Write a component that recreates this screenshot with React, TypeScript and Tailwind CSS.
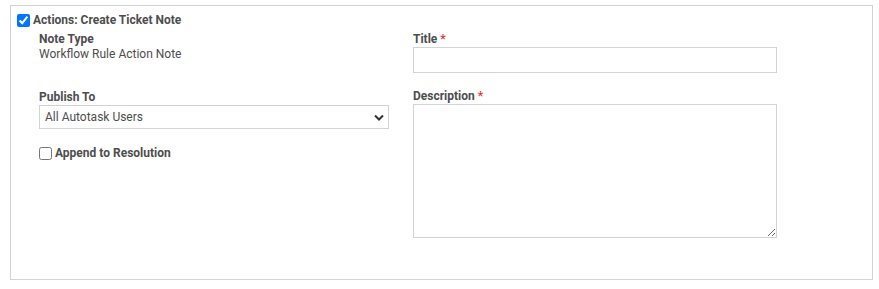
import React from "react";

export default function App() {
  return (
    <div className="pt-[5px] pl-[10px] pr-[6px] bg-white" style={{ fontFamily: "Roboto, 'Liberation Sans', sans-serif" }}>
      <div className="w-[863px] h-[275px] border border-[#d3d3d3] text-[12px] text-[#4d4d4d]">
        <div className="flex items-center h-[14px] mt-[7px] ml-[6px]">
          <input type="checkbox" defaultChecked className="w-[13px] h-[13px] m-0 accent-[#0075ff]" />
          <span className="ml-[3px] font-bold leading-[14px]">Actions: Create Ticket Note</span>
        </div>
        <div className="flex ml-[28px] mt-[5px] gap-[24px]">
          <div className="w-[350px] flex flex-col">
            <div className="font-bold leading-[14px]">Note Type</div>
            <div className="leading-[14px] mt-[1px]">Workflow Rule Action Note</div>
            <div className="font-bold leading-[14px] mt-[29px]">Publish To</div>
            <div className="mt-[1px] h-[24px] border border-[#d3d3d3] flex items-center justify-between pl-[5px] pr-[4px]">
              <span>All Autotask Users</span>
              <svg width="10" height="7" viewBox="0 0 10 7">
                <path d="M1 1.5 L5 5.5 L9 1.5" fill="none" stroke="#333" strokeWidth="2" />
              </svg>
            </div>
            <div className="flex items-center mt-[17px] h-[14px]">
              <input type="checkbox" className="w-[13px] h-[13px] m-0" />
              <span className="ml-[3px] font-bold leading-[14px]">Append to Resolution</span>
            </div>
          </div>
          <div className="w-[364px] flex flex-col">
            <div className="font-bold leading-[14px]">
              Title <span className="text-[#e53935]">*</span>
            </div>
            <div className="mt-[1px] h-[26px] border border-[#d3d3d3]" />
            <div className="font-bold leading-[14px] mt-[16px]">
              Description <span className="text-[#e53935]">*</span>
            </div>
            <textarea className="mt-[1px] h-[134px] border border-[#d3d3d3] outline-none resize" />
          </div>
        </div>
      </div>
    </div>
  );
}
